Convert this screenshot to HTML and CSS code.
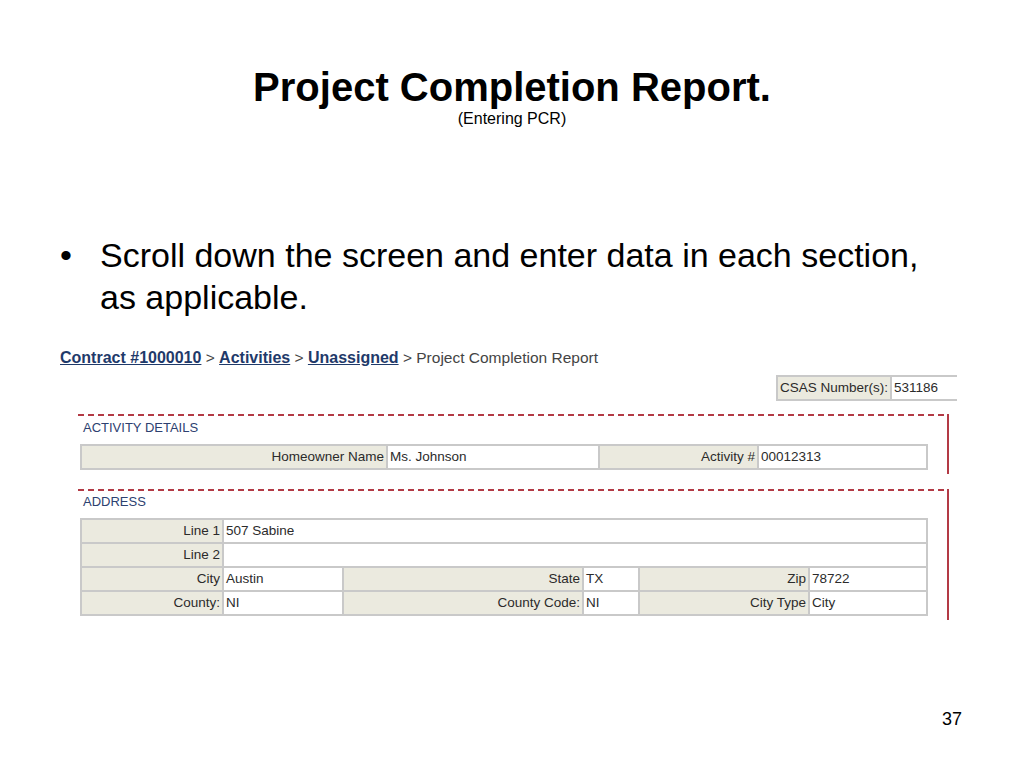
FILE: index.html
```html
<!DOCTYPE html>
<html lang="en">
<head>
    <meta charset="UTF-8">
    <meta name="viewport" content="width=device-width, initial-scale=1.0">
    <title>Project Completion Report</title>
    <link rel="stylesheet" href="styles.css">
</head>
<body>
    <div class="slide">
        <header class="slide-head">
            <h1>Project Completion Report.</h1>
            <p class="sub">(Entering PCR)</p>
        </header>

        <div class="point">
            <span class="dot">&bull;</span>
            <p>Scroll down the screen and enter data in each section, as applicable.</p>
        </div>

        <div class="shot">
            <div class="crumbs">
                <a href="#">Contract #1000010</a> &gt; <a href="#">Activities</a> &gt; <a href="#">Unassigned</a> &gt; Project Completion Report
            </div>

            <div class="csas-row">
                <div class="csas">
                    <table class="grid">
                        <tr>
                            <td class="lbl csas-lbl">CSAS Number(s):</td>
                            <td class="val csas-val">531186</td>
                        </tr>
                    </table>
                </div>
            </div>

            <div class="section">
                <h4>ACTIVITY DETAILS</h4>
                <table class="grid">
                    <colgroup>
                        <col style="width:304px"><col style="width:210px"><col style="width:157px"><col style="width:167px">
                    </colgroup>
                    <tr>
                        <td class="lbl">Homeowner Name</td>
                        <td class="val">Ms. Johnson</td>
                        <td class="lbl">Activity #</td>
                        <td class="val">00012313</td>
                    </tr>
                </table>
            </div>

            <div class="section">
                <h4>ADDRESS</h4>
                <table class="grid">
                    <colgroup>
                        <col style="width:140px"><col style="width:118px"><col style="width:238px"><col style="width:54px"><col style="width:168px"><col style="width:116px">
                    </colgroup>
                    <tr>
                        <td class="lbl">Line 1</td>
                        <td class="val" colspan="5">507 Sabine</td>
                    </tr>
                    <tr>
                        <td class="lbl">Line 2</td>
                        <td class="val" colspan="5"></td>
                    </tr>
                    <tr>
                        <td class="lbl">City</td>
                        <td class="val">Austin</td>
                        <td class="lbl">State</td>
                        <td class="val">TX</td>
                        <td class="lbl">Zip</td>
                        <td class="val">78722</td>
                    </tr>
                    <tr>
                        <td class="lbl">County:</td>
                        <td class="val">NI</td>
                        <td class="lbl">County Code:</td>
                        <td class="val">NI</td>
                        <td class="lbl">City Type</td>
                        <td class="val">City</td>
                    </tr>
                </table>
            </div>
        </div>

        <div class="page-num">37</div>
    </div>
</body>
</html>
```

FILE: styles.css
```css
:root {
    --ink: #000;
    --navy: #1f3a6a;
    --heading: #2d4170;
    --cell-line: #c9c9c9;
    --cell-label: #ebeadf;
    --red: #b33a45;
}

body {
    margin: 0;
    background: #fff;
    font-family: 'Liberation Sans', Arial, sans-serif;
    color: var(--ink);
}

.slide {
    width: 1024px;
    height: 768px;
    overflow: hidden;
}

.slide-head {
    padding-top: 65px;
    text-align: center;
}

.slide-head h1 {
    margin: 0;
    font-size: 40px;
    line-height: 44px;
    font-weight: bold;
}

.slide-head .sub {
    margin: 1px 0 0;
    font-size: 16px;
    line-height: 18px;
}

.point {
    display: flex;
    margin-top: 106px;
    padding-left: 60px;
    font-size: 34px;
    line-height: 42px;
}

.point .dot {
    width: 40px;
}

.point p {
    margin: 0;
    width: 850px;
}

.shot {
    padding-left: 60px;
    margin-top: 31px;
}

.crumbs {
    font-size: 15.5px;
    line-height: 18px;
    color: #444;
}

.crumbs a {
    color: var(--navy);
    font-weight: bold;
    font-size: 16px;
}

.csas-row {
    display: flex;
    justify-content: flex-end;
    margin-top: 8px;
    padding-right: 67px;
}

.csas {
    width: 181px;
    overflow: hidden;
}

.csas .grid {
    width: 240px;
}

.csas-lbl {
    width: 108px;
}

.grid {
    border-collapse: separate;
    border-spacing: 2px;
    background: var(--cell-line);
    table-layout: fixed;
    width: 848px;
    font-size: 13.5px;
    color: #2b2b2b;
}

.grid td {
    height: 22px;
    padding: 0 2px;
    line-height: 22px;
    white-space: nowrap;
    overflow: hidden;
}

.grid .lbl {
    background: var(--cell-label);
    text-align: right;
}

.grid .val {
    background: #fff;
    text-align: left;
}

.section {
    box-sizing: border-box;
    width: 871px;
    margin: 13px 0 0 18px;
    padding: 6px 19px 4px 2px;
    border-right: 2px solid var(--red);
    background: repeating-linear-gradient(to right, var(--red) 0 6px, transparent 6px 10px) top left / 100% 2px no-repeat;
}

.section + .section {
    margin-top: 15px;
    padding-top: 5px;
}

.section h4 {
    margin: 0 0 8px 3px;
    font-size: 13px;
    line-height: 16px;
    font-weight: normal;
    color: var(--heading);
}

.page-num {
    margin-top: 89px;
    padding-right: 62px;
    text-align: right;
    font-size: 18px;
    line-height: 20px;
}
```
